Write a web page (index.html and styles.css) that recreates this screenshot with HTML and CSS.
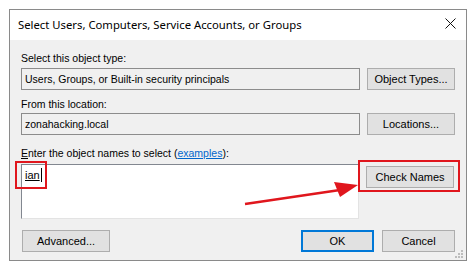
FILE: index.html
```html
<!DOCTYPE html>
<html>
<head>
<meta charset="utf-8">
<link rel="stylesheet" href="styles.css">
</head>
<body>
<div class="dialog">
  <div class="titlebar">
    <span class="title">Select Users, Computers, Service Accounts, or Groups</span>
    <svg class="close" width="11" height="11" viewBox="0 0 11 11"><path d="M0.5 0.5 L10.5 10.5 M10.5 0.5 L0.5 10.5" stroke="#111" stroke-width="1" fill="none"/></svg>
  </div>
  <div class="content">
    <div class="label l1">Select this object type:</div>
    <div class="row">
      <div class="field">Users, Groups, or Built-in security principals</div>
      <div class="btn">Object Types...</div>
    </div>
    <div class="label l2">From this location:</div>
    <div class="row">
      <div class="field">zonahacking.local</div>
      <div class="btn">Locations...</div>
    </div>
    <div class="label l3"><u>E</u>nter the object names to select (<a class="link">examples</a>):</div>
    <div class="row">
      <div class="area"><span class="typed">ian</span><span class="caret"></span></div>
      <div class="side"><div class="btn">Check Names</div></div>
    </div>
    <div class="footer">
      <div class="btn">Advanced...</div>
      <div class="actions">
        <div class="btn ok">OK</div>
        <div class="btn cancel">Cancel</div>
      </div>
    </div>
    <svg class="grip" width="8" height="8" viewBox="0 0 8 8">
      <rect x="6" y="0" width="2" height="2" fill="#bcbcbc"/>
      <rect x="3" y="3" width="2" height="2" fill="#bcbcbc"/>
      <rect x="6" y="3" width="2" height="2" fill="#bcbcbc"/>
      <rect x="0" y="6" width="2" height="2" fill="#bcbcbc"/>
      <rect x="3" y="6" width="2" height="2" fill="#bcbcbc"/>
      <rect x="6" y="6" width="2" height="2" fill="#bcbcbc"/>
    </svg>
  </div>
</div>
<svg class="annot" width="476" height="278" viewBox="0 0 476 278">
  <rect x="16" y="162" width="30" height="26" fill="none" stroke="#e0161d" stroke-width="2"/>
  <rect x="359" y="161" width="100" height="30" fill="none" stroke="#e0161d" stroke-width="2"/>
  <path d="M245 204 L340 190" stroke="#e0161d" stroke-width="2.5" fill="none"/>
  <path d="M358 185 L334 182 L340 197 Z" fill="#e0161d"/>
</svg>
</body>
</html>
```

FILE: styles.css
```css
html, body {
  margin: 0;
  padding: 0;
  background: #ffffff;
}
body {
  width: 476px;
  height: 278px;
  position: relative;
  overflow: hidden;
  font-family: "Liberation Sans", Arial, sans-serif;
  font-size: 10.5px;
  color: #000;
}
.dialog {
  margin: 9px 0 0 9px;
  width: 456px;
  height: 250px;
  border: 1px solid #8a8a8a;
  display: flex;
  flex-direction: column;
  background: #f0f0f0;
}
.titlebar {
  height: 30px;
  background: #ffffff;
  display: flex;
  align-items: center;
  justify-content: space-between;
  padding: 0 10px 0 8px;
  flex: none;
}
.title {
  font-family: "Noto Sans", "Liberation Sans", sans-serif;
  font-size: 11.3px;
  color: #000;
  margin-top: -2px;
}
.close {
  margin-top: -4px;
}
.content {
  flex: 1;
  position: relative;
  padding: 0 11px 0 11px;
}
.label {
  height: 14px;
  line-height: 14px;
  white-space: nowrap;
}
.l1 { margin-top: 11px; margin-bottom: 3px; }
.l2 { margin-top: 7px; margin-bottom: 2px; }
.l3 { margin-top: 11px; margin-bottom: 4px; }
.link {
  color: #0066cc;
  text-decoration: underline;
}
.row {
  display: flex;
  gap: 7px;
}
.field {
  height: 20px;
  border: 1px solid #8c8c8c;
  background: #f0f0f0;
  line-height: 20px;
  padding-left: 3px;
  flex: none;
  width: 334px;
}
.btn {
  width: 86px;
  height: 20px;
  border: 1px solid #adadad;
  background: #e1e1e1;
  text-align: center;
  line-height: 20px;
  flex: none;
  font-size: 11px;
}
.area {
  background: #ffffff;
  border-top: 1px solid #828790;
  border-left: 1px solid #828790;
  border-right: 1px solid #e3e3e3;
  border-bottom: 1px solid #e3e3e3;
  padding: 3px 0 0 3px;
  box-sizing: border-box;
  flex: none;
  width: 338px;
  height: 55px;
  display: flex;
  align-items: flex-start;
}
.typed {
  text-decoration: underline;
  line-height: 14px;
  font-size: 11px;
}
.caret {
  display: inline-block;
  width: 1px;
  height: 14px;
  background: #000;
  margin-left: 1px;
}
.side {
  padding-top: 2px;
}
.footer {
  display: flex;
  justify-content: space-between;
  margin-top: 11px;
  padding-left: 1px;
}
.actions {
  display: flex;
  gap: 8px;
}
.ok {
  border: 2px solid #0078d7;
  width: 69px;
  height: 18px;
  line-height: 18px;
}
.cancel {
  width: 71px;
}
.grip {
  position: absolute;
  right: 3px;
  bottom: 2px;
}
.annot {
  position: absolute;
  left: 0;
  top: 0;
}
```
